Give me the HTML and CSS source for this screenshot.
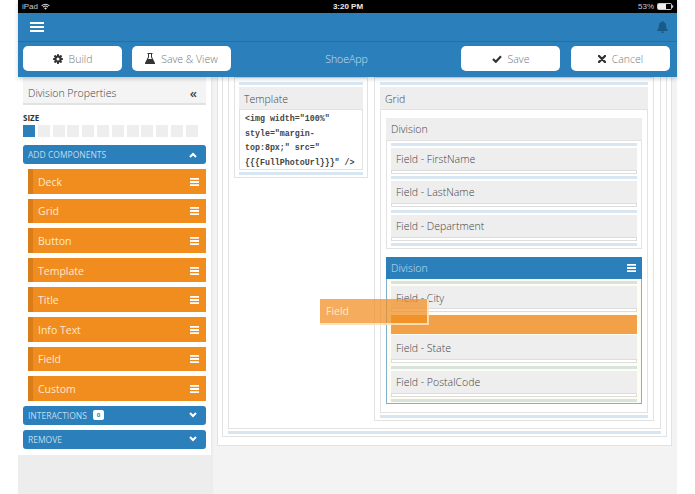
FILE: index.html
```html
<!DOCTYPE html>
<html lang="en">
<head>
<meta charset="utf-8">
<title>ShoeApp</title>
<link rel="stylesheet" href="styles.css">
</head>
<body>
<div class="app">
  <header class="header">
    <div class="status">
      <div class="status-left">iPad
        <svg class="wifi" width="9" height="7" viewBox="0 0 9 7"><path d="M.3 2.4a6 6 0 0 1 8.4 0l-.7.8a5 5 0 0 0-7 0zM1.7 3.8a4 4 0 0 1 5.6 0l-.7.8a3 3 0 0 0-4.2 0zM3.1 5.2a2 2 0 0 1 2.8 0L4.5 6.8z" fill="#ddd"/></svg>
      </div>
      <div class="status-center">3:20 PM</div>
      <div class="status-right">53%
        <svg width="17" height="7" viewBox="0 0 17 7"><rect x=".5" y=".5" width="14" height="6" rx="1" fill="none" stroke="#ccc"/><rect x="1" y="1" width="8" height="5" fill="#eee"/><rect x="15" y="2.3" width="1.2" height="2.4" fill="#ccc"/></svg>
      </div>
    </div>
    <div class="topbar">
      <svg width="14" height="10" viewBox="0 0 14 10"><path d="M0 0h14v2H0zM0 4h14v2H0zM0 8h14v2H0z" fill="#fff"/></svg>
      <svg width="11" height="12" viewBox="0 0 11 12"><path d="M5.5 0a1 1 0 0 1 1 1c2 .5 2.6 2 2.6 4 0 2 .6 3 1.7 4v1H.2V9c1.100-1 1.700-2 1.700-4 0-2 .6-3.500 2.600-4a1 1 0 0 1 1-1zM4 10.600h3a1.500 1.500 0 0 1-3 0z" fill="#1a5a88"/></svg>
    </div>
    <div class="toolbar">
      <div class="btn-group">
        <div class="btn">
          <svg width="10" height="10" viewBox="0 0 12 12"><g fill="#333"><rect x="4.800" y="0" width="2.400" height="12" rx=".5"/><rect x="4.800" y="0" width="2.400" height="12" rx=".5" transform="rotate(45 6 6)"/><rect x="4.800" y="0" width="2.400" height="12" rx=".5" transform="rotate(90 6 6)"/><rect x="4.800" y="0" width="2.400" height="12" rx=".5" transform="rotate(135 6 6)"/><circle cx="6" cy="6" r="4.300"/></g><circle cx="6" cy="6" r="1.800" fill="#fff"/></svg>
          <span>Build</span>
        </div>
        <div class="btn">
          <svg width="10" height="11" viewBox="0 0 10 11"><path d="M2.500 0h5v1H7v3l3 6a.7.7 0 0 1-.6 1H.6A.7.7 0 0 1 0 10l3-6V1h-.5z" fill="#333"/><path d="M4 1h2v3.300L7 6H3l1-1.700z" fill="#fff"/></svg>
          <span>Save &amp; View</span>
        </div>
      </div>
      <div class="app-name">ShoeApp</div>
      <div class="btn-group btn-group-right">
        <div class="btn">
          <svg width="10" height="8" viewBox="0 0 10 8"><path d="M1 4l2.800 2.800L9 1.200" fill="none" stroke="#333" stroke-width="2.200"/></svg>
          <span>Save</span>
        </div>
        <div class="btn">
          <svg width="8" height="8" viewBox="0 0 8 8"><path d="M1 1l6 6M7 1L1 7" fill="none" stroke="#333" stroke-width="2.400" stroke-linecap="round"/></svg>
          <span>Cancel</span>
        </div>
      </div>
    </div>
  </header>

  <div class="main">
    <aside class="sidebar">
      <div class="side-content">
        <div class="props-head"><span>Division Properties</span><span class="collapse">«</span></div>
        <div class="size-label">SIZE</div>
        <div class="sizes">
          <i class="size on"></i><i class="size"></i><i class="size"></i><i class="size"></i><i class="size"></i><i class="size"></i><i class="size"></i><i class="size"></i><i class="size"></i><i class="size"></i><i class="size"></i><i class="size"></i>
        </div>
        <div class="panel panel-first">
          <span>ADD COMPONENTS</span>
          <svg width="8" height="6" viewBox="0 0 8 6"><path d="M1 5l3-3 3 3" fill="none" stroke="#fff" stroke-width="2"/></svg>
        </div>
        <ul class="items">
          <li class="item"><span>Deck</span><svg width="9" height="8" viewBox="0 0 9 8"><path d="M0 0h9v1.800H0zM0 3.100h9v1.800H0zM0 6.200h9V8H0z" fill="#fff"/></svg></li>
          <li class="item"><span>Grid</span><svg width="9" height="8" viewBox="0 0 9 8"><path d="M0 0h9v1.800H0zM0 3.100h9v1.800H0zM0 6.200h9V8H0z" fill="#fff"/></svg></li>
          <li class="item"><span>Button</span><svg width="9" height="8" viewBox="0 0 9 8"><path d="M0 0h9v1.800H0zM0 3.100h9v1.800H0zM0 6.200h9V8H0z" fill="#fff"/></svg></li>
          <li class="item"><span>Template</span><svg width="9" height="8" viewBox="0 0 9 8"><path d="M0 0h9v1.800H0zM0 3.100h9v1.800H0zM0 6.200h9V8H0z" fill="#fff"/></svg></li>
          <li class="item"><span>Title</span><svg width="9" height="8" viewBox="0 0 9 8"><path d="M0 0h9v1.800H0zM0 3.100h9v1.800H0zM0 6.200h9V8H0z" fill="#fff"/></svg></li>
          <li class="item"><span>Info Text</span><svg width="9" height="8" viewBox="0 0 9 8"><path d="M0 0h9v1.800H0zM0 3.100h9v1.800H0zM0 6.200h9V8H0z" fill="#fff"/></svg></li>
          <li class="item"><span>Field</span><svg width="9" height="8" viewBox="0 0 9 8"><path d="M0 0h9v1.800H0zM0 3.100h9v1.800H0zM0 6.200h9V8H0z" fill="#fff"/></svg></li>
          <li class="item"><span>Custom</span><svg width="9" height="8" viewBox="0 0 9 8"><path d="M0 0h9v1.800H0zM0 3.100h9v1.800H0zM0 6.200h9V8H0z" fill="#fff"/></svg></li>
        </ul>
        <div class="panel">
          <span>INTERACTIONS<b class="badge">0</b></span>
          <svg width="8" height="6" viewBox="0 0 8 6"><path d="M1 1l3 3 3-3" fill="none" stroke="#fff" stroke-width="2"/></svg>
        </div>
        <div class="panel">
          <span>REMOVE</span>
          <svg width="8" height="6" viewBox="0 0 8 6"><path d="M1 1l3 3 3-3" fill="none" stroke="#fff" stroke-width="2"/></svg>
        </div>
      </div>
    </aside>

    <main class="canvas">
      <div class="box1">
        <div class="box2">
          <div class="box3">
            <section class="col col-template">
              <div class="bar"></div>
              <div class="head head-col">Template</div>
              <div class="code">&lt;img width="100%"<br>style="margin-<br>top:8px;" src="<br>{{{FullPhotoUrl}}}" /&gt;</div>
              <div class="bar"></div>
            </section>
            <section class="col col-grid">
              <div class="bar"></div>
              <div class="head head-col">Grid</div>
              <div class="grid-body">
                <div class="division">
                  <div class="head">Division</div>
                  <div class="div-body">
                    <div class="field"><div class="bar"></div><div class="field-head">Field - FirstName</div><div class="field-input"></div></div>
                    <div class="field"><div class="bar"></div><div class="field-head">Field - LastName</div><div class="field-input"></div></div>
                    <div class="field"><div class="bar"></div><div class="field-head">Field - Department</div><div class="field-input"></div></div>
                    <div class="bar"></div>
                  </div>
                </div>
                <div class="division division-active">
                  <div class="head head-active">
                    <span>Division</span>
                    <svg width="9" height="8" viewBox="0 0 9 8"><path d="M0 0h9v1.800H0zM0 3.100h9v1.800H0zM0 6.200h9V8H0z" fill="#fff"/></svg>
                  </div>
                  <div class="div-body div-body-active">
                    <div class="field field-nudged"><div class="bar"></div><div class="field-head">Field - City</div><div class="field-input"></div></div>
                    <div class="drop-slot"></div>
                    <div class="field field-after-slot"><div class="field-head">Field - State</div><div class="field-input"></div></div>
                    <div class="field"><div class="bar"></div><div class="field-head">Field - PostalCode</div><div class="field-input"></div></div>
                    <div class="bar"></div>
                  </div>
                </div>
              </div>
              <div class="bar"></div>
            </section>
          </div>
          <div class="bar bar-wide"></div>
        </div>
      </div>
    </main>
  </div>

  <div class="ghost">Field</div>
</div>
</body>
</html>
```

FILE: styles.css
```css
* {
  box-sizing: border-box;
}

html,
body {
  margin: 0;
  height: 100%;
  background: #fff;
}

body {
  overflow: hidden;
  font-family: "Open Sans", "Liberation Sans", sans-serif;
  font-weight: 300;
  color: #444;
}

.app {
  position: relative;
  display: flex;
  flex-direction: column;
  width: 659px;
  height: 494px;
  margin-left: 18px;
}

/* Header */
.header {
  position: relative;
  z-index: 2;
  background: #2b7fba;
  box-shadow: 0 2px 4px rgba(0, 0, 0, 0.18);
}

.status {
  display: grid;
  grid-template-columns: 1fr auto 1fr;
  align-items: center;
  height: 13px;
  padding: 0 3px 0 4px;
  background: #000;
  color: #ccc;
  font-family: "Liberation Sans", sans-serif;
  font-size: 8px;
  font-weight: 400;
}

.status-left,
.status-right {
  display: flex;
  align-items: center;
  gap: 3px;
}

.status-center {
  color: #eee;
  font-weight: bold;
}

.status-right {
  justify-content: flex-end;
}

.topbar {
  display: flex;
  align-items: center;
  justify-content: space-between;
  height: 29px;
  padding: 0 9px 1px 12px;
  border-bottom: 1px solid #26709f;
}

.toolbar {
  display: grid;
  grid-template-columns: 1fr auto 1fr;
  align-items: center;
  height: 35px;
  padding: 0 7px 2px 5px;
}

.btn-group {
  display: flex;
  gap: 10px;
}

.btn-group-right {
  justify-content: flex-end;
  gap: 11px;
}

.btn {
  display: flex;
  align-items: center;
  justify-content: center;
  gap: 6px;
  width: 99px;
  height: 25px;
  background: #fff;
  border-radius: 5px;
  color: #777;
  font-size: 10.500px;
}

.app-name {
  color: #c6e0f1;
  font-size: 10.500px;
}

/* Main */
.main {
  display: flex;
  flex: 1;
  min-height: 0;
}

/* Sidebar */
.sidebar {
  position: relative;
  z-index: 1;
  width: 193px;
  background: #ededed;
  box-shadow: 1px 0 3px rgba(0, 0, 0, 0.06);
}

.side-content {
  height: 378px;
  padding: 0 5px;
  background: #fff;
}

.props-head {
  display: flex;
  align-items: center;
  justify-content: space-between;
  height: 28px;
  padding: 5px 9px 0 5px;
  background: #f4f4f4;
  border-bottom: 2px solid #e2e2e2;
  color: #444;
  font-size: 10.500px;
}

.collapse {
  color: #444;
  font-size: 13px;
  font-weight: 600;
}

.size-label {
  margin-top: 7px;
  color: #333;
  font-size: 8px;
  font-weight: 700;
  line-height: 11px;
}

.sizes {
  display: flex;
  gap: 2.800px;
  margin-top: 2px;
}

.size {
  display: block;
  width: 12px;
  height: 12px;
  background: #eee;
}

.size.on {
  background: #2b7fba;
}

.panel {
  display: flex;
  align-items: center;
  justify-content: space-between;
  height: 19px;
  margin-top: 5px;
  padding: 0 9px 0 5px;
  background: #2b7fba;
  border-radius: 3px;
  color: #c0dcef;
  font-size: 8.500px;
  font-weight: 400;
}

.panel-first {
  margin-top: 8px;
}

.panel span {
  display: flex;
  align-items: center;
}

.badge {
  display: block;
  width: 11px;
  height: 10px;
  margin-left: 6px;
  background: #fff;
  border-radius: 2px;
  color: #2b7fba;
  font-size: 6px;
  line-height: 10px;
  text-align: center;
}

.items {
  display: flex;
  flex-direction: column;
  gap: 5px;
  margin: 5px 0 0 5px;
  padding: 0;
  list-style: none;
}

.item {
  display: flex;
  align-items: center;
  justify-content: space-between;
  height: 24.600px;
  padding: 1px 7px 0 5px;
  background: #f18d1e;
  border-left: 5px solid #d97d18;
  color: #fde8cc;
  font-size: 10.500px;
  font-weight: 400;
}

/* Canvas */
.canvas {
  flex: 1;
  min-width: 0;
  padding: 0 5px 0 6px;
  background: #f3f3f3;
}

.box1 {
  padding: 0 4px 8px;
  background: #fff;
  border: 1px solid #e2e2e2;
  border-top: 0;
}

.box2 {
  padding: 0 5px 2px;
  background: #fff;
  border: 1px solid #e2e2e2;
  border-top: 0;
}

.box3 {
  display: flex;
  align-items: flex-start;
  gap: 6px;
  padding: 0 5px 7px;
  background: #fff;
  border: 1px solid #e2e2e2;
  border-top: 0;
}

.bar {
  height: 3px;
  background: #d8e6f1;
}

.bar-wide {
  margin-top: 2px;
}

.col {
  background: #fff;
  border: 1px solid #e2e2e2;
  flex: none;
}

.col-template {
  width: 134px;
  padding: 4px 4px 2px;
}

.col-grid {
  width: 280px;
  padding: 4px 5px 2px;
}

.head {
  display: flex;
  align-items: center;
  justify-content: space-between;
  height: 22px;
  margin-top: 2px;
  padding: 0 5px;
  background: #eee;
  color: #444;
  font-size: 10.500px;
}

.head-col {
  padding-top: 1px;
}

.code {
  height: 61px;
  margin-bottom: 2px;
  padding: 2px 5px 0;
  background: #fff;
  border: 1px solid #e2e2e2;
  color: #444;
  font-family: "Liberation Mono", monospace;
  font-size: 8.300px;
  font-weight: 700;
  line-height: 14.500px;
  white-space: nowrap;
}

.grid-body {
  display: flex;
  flex-direction: column;
  gap: 8px;
  margin-bottom: 2px;
  padding: 8px 5px;
  background: #fff;
  border: 1px solid #e2e2e2;
}

.division > .head {
  margin-top: 0;
}

.div-body {
  padding: 2px 4px;
  background: #fff;
  border: 1px solid #e2e2e2;
}

.field {
  padding-bottom: 2.400px;
}

.field-head {
  display: flex;
  align-items: center;
  height: 22px;
  margin-top: 2px;
  padding: 0 5px;
  background: #eee;
  color: #444;
  font-size: 10.500px;
}

.field-nudged .field-head,
.field-after-slot .field-head {
  padding-top: 1px;
}

.field-input {
  height: 4px;
  background: #fff;
  border: 1px solid #ddd;
}

.head-active {
  background: #2b7fba;
  color: #c6e0f1;
  padding-right: 6px;
}

.div-body-active {
  padding: 2px 4px 1px;
  background: #fffcf2;
  border-color: #7fb0cc;
  border-top: 0;
}

.div-body-active .bar {
  background: #d6e3df;
}

.drop-slot {
  height: 19px;
  margin-top: 0.600px;
  background: #f2a148;
}

.field-after-slot .field-head {
  height: 24px;
  margin-top: 1px;
}

/* Dragged component */
.ghost {
  position: absolute;
  z-index: 3;
  left: 302px;
  top: 299px;
  display: flex;
  align-items: center;
  width: 109px;
  height: 26px;
  padding-left: 6px;
  background: rgba(241, 141, 30, 0.72);
  border-right: 2px solid rgba(255, 245, 225, 0.75);
  border-bottom: 2px solid rgba(255, 245, 225, 0.75);
  color: #fde8cc;
  font-size: 10.500px;
  font-weight: 400;
}
```
